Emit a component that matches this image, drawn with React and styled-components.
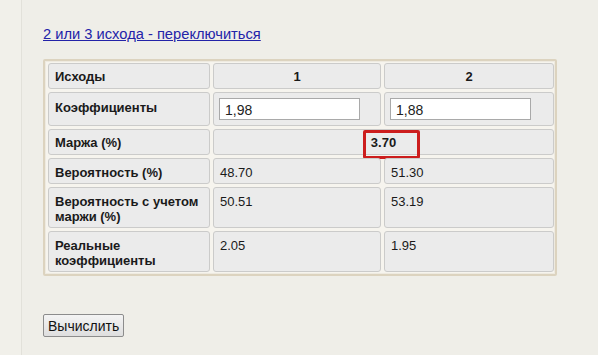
import React from "react"
import styled, { createGlobalStyle } from "styled-components"

const GlobalStyle = createGlobalStyle`
  html, body {
    margin: 0;
    padding: 0;
    background: #efeee8;
  }
  body {
    font-family: Arial, "Liberation Sans", sans-serif;
    color: #222;
  }
`

const Page = styled.div`
  width: 598px;
  height: 355px;
  display: flex;
  overflow: hidden;
`

const Gutter = styled.div`
  width: 21px;
  flex-shrink: 0;
  background: #f1f0ea;
  border-right: 1px solid #e2e1da;
`

const Content = styled.div`
  padding: 26px 0 0 21px;
  display: flex;
  flex-direction: column;
  align-items: flex-start;
`

const SwitchLink = styled.a`
  font-size: 14.7px;
  line-height: 17px;
  color: #2323a8;
  text-decoration: underline;
  cursor: pointer;
`

const Frame = styled.div`
  margin-top: 16px;
  padding: 2px 1px 2px 3px;
  border: 2px solid #dcd3bf;
  border-radius: 2px;
  background: #f6f4ee;
  box-shadow: inset 0 0 0 1px #eeeae0;
`

const Grid = styled.div`
  display: grid;
  grid-template-columns: 162px 168px 170px;
  grid-template-rows: 26px 34px 26px 26px 41px 41px;
  gap: 3px;
`

const Cell = styled.div`
  position: relative;
  box-sizing: border-box;
  background: #ebebeb;
  border: 1px solid #cbcbca;
  border-radius: 3px;
  padding: ${p => p.$pad || "5px 6px"};
  font-size: 13px;
  line-height: 15px;
  font-weight: ${p => (p.$bold ? "bold" : "normal")};
  text-align: ${p => p.$align || "left"};
  grid-column: ${p => p.$span || "auto"};
  color: #1a1a1a;
`

const Input = styled.input`
  box-sizing: border-box;
  width: 141px;
  height: 22px;
  border: 1px solid #a9a9a9;
  background: #fff;
  padding: 1px 5px 0;
  font-family: Arial, "Liberation Sans", sans-serif;
  font-size: 14px;
  color: #222;
  outline: none;
`

const Highlight = styled.div`
  position: absolute;
  left: 149px;
  top: 0;
  width: 57px;
  height: 29px;
  box-sizing: border-box;
  border: 3px solid #cc1d1d;
  border-radius: 2px;
  pointer-events: none;
`

const Button = styled.button`
  margin-top: 38px;
  height: 23px;
  padding: 0 4px;
  font-family: Arial, "Liberation Sans", sans-serif;
  font-size: 14px;
  color: #111;
  background: linear-gradient(#f4f4f4, #dedede);
  border: 1px solid #8c8c8c;
  border-radius: 2px;
`

const rows = [
  ["Вероятность (%)", "48.70", "51.30"],
  ["Вероятность с учетом маржи (%)", "50.51", "53.19"],
  ["Реальные коэффициенты", "2.05", "1.95"],
]

export default function App() {
  return (
    <Page>
      <GlobalStyle />
      <Gutter />
      <Content>
        <SwitchLink>2 или 3 исхода - переключиться</SwitchLink>
        <Frame>
          <Grid>
            <Cell $bold>Исходы</Cell>
            <Cell $bold $align="center">1</Cell>
            <Cell $bold $align="center">2</Cell>

            <Cell $bold $pad="7px 6px">Коэффициенты</Cell>
            <Cell $pad="5px 5px"><Input defaultValue="1,98" /></Cell>
            <Cell $pad="5px 5px"><Input defaultValue="1,88" /></Cell>

            <Cell $bold>Маржа (%)</Cell>
            <Cell $bold $align="center" $span="span 2">
              3.70
              <Highlight />
            </Cell>

            {rows.map(([label, a, b]) => (
              <React.Fragment key={label}>
                <Cell $bold $pad="6px 6px">{label}</Cell>
                <Cell $pad="6px 6px">{a}</Cell>
                <Cell $pad="6px 6px">{b}</Cell>
              </React.Fragment>
            ))}
          </Grid>
        </Frame>
        <Button>Вычислить</Button>
      </Content>
    </Page>
  )
}
